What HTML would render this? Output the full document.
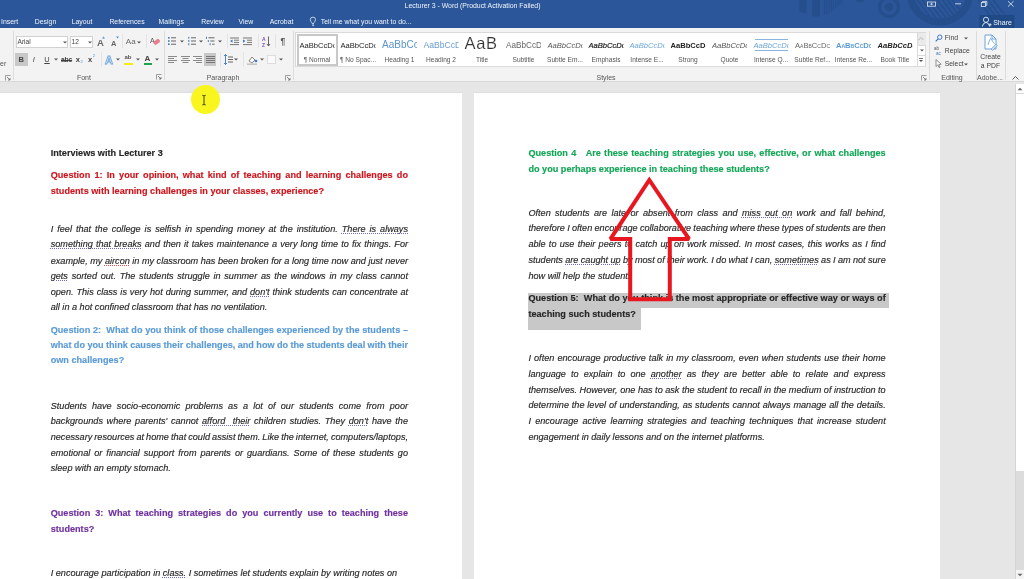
<!DOCTYPE html>
<html><head><meta charset="utf-8">
<style>
*{box-sizing:border-box}
html,body{margin:0;padding:0}
body{width:1024px;height:579px;overflow:hidden;position:relative;background:#e6e6e6;font-family:"Liberation Sans",sans-serif}
.abs{position:absolute}
.rt{position:absolute;white-space:pre}
#titlebar{position:absolute;left:0;top:0;width:1024px;height:28.3px;background:#2b579a;color:#fff;overflow:hidden}
.tab{position:absolute;top:17px;font-size:6.9px;color:#f0f4fa;line-height:9px;white-space:pre}
#ribbon{position:absolute;left:0;top:28.3px;width:1024px;height:54.2px;background:#f3f3f3;border-bottom:1px solid #d9d9d9}
.page{position:absolute;top:92.8px;height:500px;background:#fff;box-shadow:0 -0.5px 0 #d6d6d6}
.ln{position:absolute;font-size:9.15px;line-height:12px;white-space:pre;-webkit-text-stroke:0.15px currentColor}
.ub{text-decoration:underline dotted;text-decoration-color:#6a6ad0;text-underline-offset:0.6px;text-decoration-thickness:1px}
.ur{text-decoration:underline dotted;text-decoration-color:#e05050;text-underline-offset:0.6px;text-decoration-thickness:1px}
</style></head><body>
<div id="all" style="position:absolute;left:0;top:0;width:1024px;height:579px;will-change:transform">
<div id="titlebar">
<svg class="abs" style="left:0;top:0" width="1024" height="28"><path d="M799.3 0h7.1v13.5l-7.1-2z" fill="#254e8c"/><rect x="812.2" y="0" width="7.7" height="16.4" fill="#254e8c"/><rect x="824.0" y="0" width="1.2" height="15" fill="#254e8c"/><rect x="826.2" y="0" width="1.2" height="14.5" fill="#254e8c"/><rect x="828.4" y="0" width="1.2" height="13.5" fill="#254e8c"/><rect x="830.6" y="0" width="1.2" height="12" fill="#254e8c"/><rect x="832.8" y="0" width="1.2" height="10" fill="#254e8c"/><rect x="835.0" y="0" width="1.2" height="8" fill="#254e8c"/><rect x="837.2" y="0" width="1.2" height="6.5" fill="#254e8c"/><rect x="839.4" y="0" width="1.2" height="5" fill="#254e8c"/><rect x="841.6" y="0" width="1.2" height="3" fill="#254e8c"/><path d="M855 0h9.4q-2 2.5-4.7 2.5t-4.7-2.5z" fill="#254e8c"/><circle cx="889" cy="7" r="9.4" fill="none" stroke="#254e8c" stroke-width="3.4"/><circle cx="889" cy="7" r="4.3" fill="#254e8c"/><clipPath id="bigc"><circle cx="940" cy="-8" r="30"/></clipPath><circle cx="940" cy="-8" r="30" fill="none" stroke="#254e8c" stroke-width="7"/><g clip-path="url(#bigc)"><path d="M900 -10l30 40" stroke="#254e8c" stroke-width="1.6"/><path d="M905 -10l30 40" stroke="#254e8c" stroke-width="1.6"/><path d="M910 -10l30 40" stroke="#254e8c" stroke-width="1.6"/><path d="M915 -10l30 40" stroke="#254e8c" stroke-width="1.6"/><path d="M920 -10l30 40" stroke="#254e8c" stroke-width="1.6"/><path d="M925 -10l30 40" stroke="#254e8c" stroke-width="1.6"/><path d="M930 -10l30 40" stroke="#254e8c" stroke-width="1.6"/><path d="M935 -10l30 40" stroke="#254e8c" stroke-width="1.6"/><path d="M940 -10l30 40" stroke="#254e8c" stroke-width="1.6"/><path d="M945 -10l30 40" stroke="#254e8c" stroke-width="1.6"/></g><path d="M978 0l14 18" stroke="#254e8c" stroke-width="1.5"/><path d="M983 0l14 18" stroke="#254e8c" stroke-width="1.5"/><path d="M988 0l14 18" stroke="#254e8c" stroke-width="1.5"/><path d="M993 0l14 18" stroke="#254e8c" stroke-width="1.5"/><rect x="927.5" y="2" width="8" height="4.2" fill="none" stroke="#e6ecf5" stroke-width="0.8"/><path d="M930 4.1h3M931.5 3v2.2" stroke="#e6ecf5" stroke-width="0.7"/><path d="M955 3.8h6" stroke="#e6ecf5" stroke-width="0.8"/><rect x="981.3" y="2.4" width="4.2" height="4" fill="none" stroke="#e6ecf5" stroke-width="0.8"/><path d="M982.6 2.4v-1h4.2v4h-1.3" fill="none" stroke="#e6ecf5" stroke-width="0.8"/><path d="M1008 1.2l5.6 5.4M1013.6 1.2l-5.6 5.4" stroke="#e6ecf5" stroke-width="0.8"/><rect x="979.3" y="15.1" width="35.1" height="12.9" fill="#1f4a85"/><circle cx="986" cy="19.8" r="2.6" fill="none" stroke="#e6ecf5" stroke-width="0.9"/><path d="M982.3 26.6q0.5-3.6 3.7-4.2q3.2 0.6 3.7 4.2" fill="none" stroke="#e6ecf5" stroke-width="0.9"/><path d="M988.6 24.7h3M990.1 23.2v3" stroke="#e6ecf5" stroke-width="0.8"/><path d="M312.3 24.2v-1.2q-2-1.3-2-3.3a2.6 2.6 0 0 1 5.2 0q0 2-2 3.3v1.2z" fill="none" stroke="#e6ecf5" stroke-width="0.8"/><path d="M312.3 25.6h1.8" stroke="#e6ecf5" stroke-width="0.8"/></svg>
<div class="tab" style="left:993.2px;top:17.6px;font-size:7px">Share</div>
  <div class="tab" style="left:404.6px;top:1px">Lecturer 3 - Word (Product Activation Failed)</div>
  <div class="tab" style="left:1px">Insert</div>
  <div class="tab" style="left:34.8px">Design</div>
  <div class="tab" style="left:71.7px">Layout</div>
  <div class="tab" style="left:109.4px">References</div>
  <div class="tab" style="left:158.6px">Mailings</div>
  <div class="tab" style="left:201.2px">Review</div>
  <div class="tab" style="left:238.5px">View</div>
  <div class="tab" style="left:269.7px">Acrobat</div>
  <div class="tab" style="left:320.8px">Tell me what you want to do...</div>
</div>
<div id="ribbon"></div>
<div class="rt" style="left:0px;top:60.10px;font-size:7px;line-height:8.40px;color:#555;">er</div>
<svg class="abs" style="left:4.5px;top:75px" width="6" height="6"><path d="M0.5 5.5v-5h5" stroke="#888" fill="none" stroke-width="0.8"/><path d="M2 2l3 3M5 3v2h-2" stroke="#666" fill="none" stroke-width="0.8"/></svg>
<div class="abs" style="left:12.6px;top:31px;width:1.00px;height:49.00px;background:#dcdcdc"></div>
<div class="abs" style="left:15.6px;top:35.7px;width:52.90px;height:12.50px;background:#fff;border:1px solid #d2d2d2"></div>
<div class="rt" style="left:17.5px;top:38.04px;font-size:6.6px;line-height:7.92px;color:#444;">Arial</div>
<svg class="abs" style="left:62.5px;top:40.5px" width="5" height="3"><path d="M0 0.5h4l-2 2z" fill="#555"/></svg>
<div class="abs" style="left:69.7px;top:35.7px;width:23.50px;height:12.50px;background:#fff;border:1px solid #d2d2d2"></div>
<div class="rt" style="left:71.5px;top:38.04px;font-size:6.6px;line-height:7.92px;color:#444;">12</div>
<svg class="abs" style="left:87.5px;top:40.5px" width="5" height="3"><path d="M0 0.5h4l-2 2z" fill="#555"/></svg>
<div class="rt" style="left:97px;top:36.50px;font-size:9.5px;line-height:11.40px;color:#666;font-weight:bold">A</div>
<svg class="abs" style="left:102px;top:36px" width="4" height="3"><path d="M0 2.5l1.5-2 1.5 2z" fill="#4a8fd0"/></svg>
<div class="rt" style="left:111px;top:38.50px;font-size:7.5px;line-height:9.00px;color:#666;font-weight:bold">A</div>
<svg class="abs" style="left:116px;top:36px" width="4" height="3"><path d="M0 0.5l1.5 2 1.5-2z" fill="#4a8fd0"/></svg>
<div class="abs" style="left:121.8px;top:34px;width:1.00px;height:14.00px;background:#e4e4e4"></div>
<div class="rt" style="left:125.8px;top:37.20px;font-size:8px;line-height:9.60px;color:#666;">Aa</div>
<svg class="abs" style="left:137px;top:40.5px" width="5" height="3"><path d="M0 0.5h4l-2 2z" fill="#555"/></svg>
<div class="abs" style="left:146px;top:34px;width:1.00px;height:14.00px;background:#e4e4e4"></div>
<svg class="abs" style="left:150px;top:36px" width="11" height="11"><text x="0" y="7" font-family="Liberation Sans" font-size="7" fill="#555">A</text><rect x="3.5" y="4" width="6.5" height="4" rx="1" transform="rotate(-35 6.5 6)" fill="#e87f8c"/></svg>
<div class="abs" style="left:15.3px;top:53px;width:12.40px;height:13.20px;background:#c8c8c8"></div>
<div class="rt" style="left:18.6px;top:55.10px;font-size:7.5px;line-height:9.00px;color:#444;font-weight:bold">B</div>
<div class="rt" style="left:32.8px;top:55.10px;font-size:7.5px;line-height:9.00px;color:#444;font-style:italic">I</div>
<div class="rt" style="left:44.3px;top:55.10px;font-size:7.5px;line-height:9.00px;color:#444;"><u>U</u></div>
<svg class="abs" style="left:54px;top:58.3px" width="5" height="3"><path d="M0 0.5h4l-2 2z" fill="#555"/></svg>
<div class="rt" style="left:61px;top:55.52px;font-size:6.8px;line-height:8.16px;color:#444;font-weight:bold;letter-spacing:-0.2px"><s>abc</s></div>
<div class="rt" style="left:75.8px;top:55.10px;font-size:7.5px;line-height:9.00px;color:#444;font-weight:bold">x</div>
<div class="rt" style="left:80.6px;top:60.10px;font-size:4px;line-height:4.80px;color:#4a8fd0;">2</div>
<div class="rt" style="left:88px;top:55.10px;font-size:7.5px;line-height:9.00px;color:#444;font-weight:bold">x</div>
<div class="rt" style="left:92.8px;top:54.10px;font-size:4px;line-height:4.80px;color:#4a8fd0;">2</div>
<div class="abs" style="left:100.8px;top:52px;width:1.00px;height:15.00px;background:#e4e4e4"></div>
<svg class="abs" style="left:104px;top:53px" width="11" height="12"><text x="1" y="10.5" font-family="Liberation Sans" font-size="11" font-weight="bold" fill="#eaf2fb" stroke="#6fa6da" stroke-width="0.8">A</text></svg>
<svg class="abs" style="left:115.7px;top:58.3px" width="5" height="3"><path d="M0 0.5h4l-2 2z" fill="#555"/></svg>
<div class="rt" style="left:124.5px;top:53.90px;font-size:6px;line-height:7.20px;color:#555;font-weight:bold">ab</div>
<div class="abs" style="left:124px;top:62.5px;width:9.00px;height:2.50px;background:#f2ee0a"></div>
<svg class="abs" style="left:136px;top:58.3px" width="5" height="3"><path d="M0 0.5h4l-2 2z" fill="#555"/></svg>
<div class="rt" style="left:144.6px;top:53.70px;font-size:8px;line-height:9.60px;color:#444;font-weight:bold">A</div>
<div class="abs" style="left:143.5px;top:62.5px;width:8.90px;height:2.50px;background:#1ca84a"></div>
<svg class="abs" style="left:155px;top:58.3px" width="5" height="3"><path d="M0 0.5h4l-2 2z" fill="#555"/></svg>
<div class="rt" style="left:83.9px;top:73.70px;font-size:7px;line-height:8.40px;color:#555;transform:translateX(-50%);">Font</div>
<svg class="abs" style="left:155.9px;top:74px" width="6" height="6"><path d="M0.5 5.5v-5h5" stroke="#888" fill="none" stroke-width="0.8"/><path d="M2 2l3 3M5 3v2h-2" stroke="#666" fill="none" stroke-width="0.8"/></svg>
<div class="abs" style="left:163.5px;top:31px;width:1.00px;height:49.00px;background:#dcdcdc"></div>
<svg class="abs" style="left:168px;top:36px" width="10" height="10"><rect x="0" y="1.0" width="1.6" height="1.6" fill="#3d78c0"/><rect x="3" y="1.3" width="5" height="1" fill="#666"/><rect x="0" y="4.2" width="1.6" height="1.6" fill="#3d78c0"/><rect x="3" y="4.5" width="5" height="1" fill="#666"/><rect x="0" y="7.4" width="1.6" height="1.6" fill="#3d78c0"/><rect x="3" y="7.7" width="5" height="1" fill="#666"/></svg>
<svg class="abs" style="left:179.6px;top:40.0px" width="5" height="3"><path d="M0 0.5h4l-2 2z" fill="#555"/></svg>
<svg class="abs" style="left:188px;top:36px" width="10" height="10"><rect x="0.3" y="0.8" width="1" height="2" fill="#3d78c0"/><rect x="3" y="1.3" width="5" height="1" fill="#666"/><rect x="0.3" y="4.0" width="1" height="2" fill="#3d78c0"/><rect x="3" y="4.5" width="5" height="1" fill="#666"/><rect x="0.3" y="7.2" width="1" height="2" fill="#3d78c0"/><rect x="3" y="7.7" width="5" height="1" fill="#666"/></svg>
<svg class="abs" style="left:199px;top:40.0px" width="5" height="3"><path d="M0 0.5h4l-2 2z" fill="#555"/></svg>
<svg class="abs" style="left:206px;top:36px" width="10" height="10"><rect x="0.0" y="0.8" width="1" height="2" fill="#3d78c0"/><rect x="2.5" y="1.3" width="6.0" height="1" fill="#666"/><rect x="1.8" y="4.0" width="1" height="2" fill="#3d78c0"/><rect x="4.3" y="4.5" width="4.2" height="1" fill="#666"/><rect x="3.6" y="7.2" width="1" height="2" fill="#3d78c0"/><rect x="6.1" y="7.7" width="2.4" height="1" fill="#666"/></svg>
<svg class="abs" style="left:218px;top:40.0px" width="5" height="3"><path d="M0 0.5h4l-2 2z" fill="#555"/></svg>
<div class="abs" style="left:226.8px;top:34px;width:1.00px;height:14.00px;background:#e4e4e4"></div>
<svg class="abs" style="left:230px;top:37px" width="10" height="9"><rect x="0" y="0.5" width="9" height="1" fill="#777"/><rect x="4" y="2.7" width="5" height="1" fill="#777"/><rect x="4" y="4.9" width="5" height="1" fill="#777"/><rect x="0" y="7.1000000000000005" width="9" height="1" fill="#777"/><path d="M2.5 2.5l-2.5 1.6 2.5 1.6z" fill="#3d78c0"/></svg>
<svg class="abs" style="left:243px;top:37px" width="10" height="9"><rect x="0" y="0.5" width="9" height="1" fill="#777"/><rect x="4" y="2.7" width="5" height="1" fill="#777"/><rect x="4" y="4.9" width="5" height="1" fill="#777"/><rect x="0" y="7.1000000000000005" width="9" height="1" fill="#777"/><path d="M0 2.5l2.5 1.6-2.5 1.6z" fill="#3d78c0"/></svg>
<div class="abs" style="left:257.8px;top:34px;width:1.00px;height:14.00px;background:#e4e4e4"></div>
<svg class="abs" style="left:262px;top:36px" width="9" height="11"><text x="0" y="5" font-family="Liberation Sans" font-size="5" font-weight="bold" fill="#7c4fb5">A</text><text x="0" y="10.5" font-family="Liberation Sans" font-size="5" font-weight="bold" fill="#7c4fb5">Z</text><path d="M6.5 0.5v9M5 8l1.5 2 1.5-2" stroke="#555" stroke-width="0.9" fill="none"/></svg>
<div class="abs" style="left:274.6px;top:34px;width:1.00px;height:14.00px;background:#e4e4e4"></div>
<div class="rt" style="left:280.4px;top:36.40px;font-size:8.5px;line-height:10.20px;color:#555;font-weight:bold">&#182;</div>
<svg class="abs" style="left:168px;top:56px" width="10" height="8"><rect x="0" y="0" width="9" height="1" fill="#8a8a8a"/><rect x="0" y="2" width="6" height="1" fill="#8a8a8a"/><rect x="0" y="4" width="9" height="1" fill="#8a8a8a"/><rect x="0" y="6" width="6" height="1" fill="#8a8a8a"/></svg>
<svg class="abs" style="left:181px;top:56px" width="10" height="8"><rect x="0.0" y="0" width="9" height="1" fill="#8a8a8a"/><rect x="1.5" y="2" width="6" height="1" fill="#8a8a8a"/><rect x="0.0" y="4" width="9" height="1" fill="#8a8a8a"/><rect x="1.5" y="6" width="6" height="1" fill="#8a8a8a"/></svg>
<svg class="abs" style="left:193px;top:56px" width="10" height="8"><rect x="0" y="0" width="9" height="1" fill="#8a8a8a"/><rect x="3" y="2" width="6" height="1" fill="#8a8a8a"/><rect x="0" y="4" width="9" height="1" fill="#8a8a8a"/><rect x="3" y="6" width="6" height="1" fill="#8a8a8a"/></svg>
<div class="abs" style="left:204px;top:53px;width:12.40px;height:13.00px;background:#c8c8c8"></div>
<svg class="abs" style="left:206px;top:56px" width="10" height="8"><rect x="0" y="0" width="9" height="1" fill="#777"/><rect x="0" y="2" width="9" height="1" fill="#777"/><rect x="0" y="4" width="9" height="1" fill="#777"/><rect x="0" y="6" width="9" height="1" fill="#777"/></svg>
<div class="abs" style="left:219.5px;top:52px;width:1.00px;height:15.00px;background:#e4e4e4"></div>
<svg class="abs" style="left:224px;top:54px" width="10" height="11"><path d="M1.5 0.5v10M0 2l1.5-1.5 1.5 1.5M0 9l1.5 1.5 1.5-1.5" stroke="#3d78c0" stroke-width="0.9" fill="none"/><rect x="4" y="2.5" width="5" height="1" fill="#666"/><rect x="4" y="5" width="5" height="1" fill="#666"/><rect x="4" y="7.5" width="5" height="1" fill="#666"/></svg>
<svg class="abs" style="left:234.3px;top:58.3px" width="5" height="3"><path d="M0 0.5h4l-2 2z" fill="#555"/></svg>
<div class="abs" style="left:242.8px;top:52px;width:1.00px;height:15.00px;background:#e4e4e4"></div>
<svg class="abs" style="left:247px;top:54px" width="11" height="11"><path d="M2 7l3-4 3 3-3 3z" fill="#fff" stroke="#666" stroke-width="0.8"/><circle cx="9" cy="7" r="1.3" fill="#3d78c0"/><rect x="0" y="9.5" width="10" height="1.3" fill="#bbb"/></svg>
<svg class="abs" style="left:259.5px;top:58.3px" width="5" height="3"><path d="M0 0.5h4l-2 2z" fill="#555"/></svg>
<svg class="abs" style="left:267px;top:55px" width="9" height="9"><rect x="0.5" y="0.5" width="8" height="8" fill="#fafafa" stroke="#b0b0b0" stroke-width="0.7" stroke-dasharray="1 1"/></svg>
<svg class="abs" style="left:279px;top:58.3px" width="5" height="3"><path d="M0 0.5h4l-2 2z" fill="#555"/></svg>
<div class="rt" style="left:223px;top:73.70px;font-size:7px;line-height:8.40px;color:#555;transform:translateX(-50%);">Paragraph</div>
<svg class="abs" style="left:285px;top:74.5px" width="6" height="6"><path d="M0.5 5.5v-5h5" stroke="#888" fill="none" stroke-width="0.8"/><path d="M2 2l3 3M5 3v2h-2" stroke="#666" fill="none" stroke-width="0.8"/></svg>
<div class="abs" style="left:292.7px;top:31px;width:1.00px;height:49.00px;background:#dcdcdc"></div>
<div class="abs" style="left:294.5px;top:32.1px;width:622.50px;height:34.50px;background:#fff;border:1px solid #dadada;border-right:none"></div>
<div class="abs" style="left:296.6px;top:33.7px;width:41.00px;height:32.30px;border:2px solid #c8c8c8"></div>
<div class="abs" style="left:299.5px;top:33.8px;width:35px;height:14px;clip-path:inset(-6px 0 -6px 0);white-space:nowrap"><span class="rt" style="position:relative;line-height:14px;font-size:7.6px;color:#222">AaBbCcDc</span></div>
<div class="rt" style="left:317px;top:55.64px;font-size:6.6px;line-height:7.92px;color:#555;transform:translateX(-50%);">&#182; Normal</div>
<div class="abs" style="left:340.5px;top:33.8px;width:35px;height:14px;clip-path:inset(-6px 0 -6px 0);white-space:nowrap"><span class="rt" style="position:relative;line-height:14px;font-size:7.6px;color:#222">AaBbCcDc</span></div>
<div class="rt" style="left:358px;top:55.64px;font-size:6.6px;line-height:7.92px;color:#555;transform:translateX(-50%);">&#182; No Spac...</div>
<div class="abs" style="left:382.0px;top:33.8px;width:35px;height:14px;clip-path:inset(-6px 0 -6px 0);white-space:nowrap"><span class="rt" style="position:relative;line-height:14px;font-size:10px;color:#5b93cc">AaBbCc</span></div>
<div class="rt" style="left:399.5px;top:55.64px;font-size:6.6px;line-height:7.92px;color:#555;transform:translateX(-50%);">Heading 1</div>
<div class="abs" style="left:423.5px;top:33.8px;width:35px;height:14px;clip-path:inset(-6px 0 -6px 0);white-space:nowrap"><span class="rt" style="position:relative;line-height:14px;font-size:8.6px;color:#6a9ccf">AaBbCcD</span></div>
<div class="rt" style="left:441px;top:55.64px;font-size:6.6px;line-height:7.92px;color:#555;transform:translateX(-50%);">Heading 2</div>
<div class="abs" style="left:464.5px;top:33.8px;width:35px;height:14px;clip-path:inset(-6px 0 -6px 0);white-space:nowrap"><span class="rt" style="position:relative;line-height:14px;font-size:16.5px;color:#333;top:1.4px;letter-spacing:0.7px;-webkit-text-stroke:0.15px #fff">AaB</span></div>
<div class="rt" style="left:482px;top:55.64px;font-size:6.6px;line-height:7.92px;color:#555;transform:translateX(-50%);">Title</div>
<div class="abs" style="left:506.0px;top:33.8px;width:35px;height:14px;clip-path:inset(-6px 0 -6px 0);white-space:nowrap"><span class="rt" style="position:relative;line-height:14px;font-size:8.2px;color:#666">AaBbCcD</span></div>
<div class="rt" style="left:523.5px;top:55.64px;font-size:6.6px;line-height:7.92px;color:#555;transform:translateX(-50%);">Subtitle</div>
<div class="abs" style="left:547.5px;top:33.8px;width:35px;height:14px;clip-path:inset(-6px 0 -6px 0);white-space:nowrap"><span class="rt" style="position:relative;line-height:14px;font-size:7.6px;color:#555;font-style:italic">AaBbCcDc</span></div>
<div class="rt" style="left:565px;top:55.64px;font-size:6.6px;line-height:7.92px;color:#555;transform:translateX(-50%);">Subtle Em...</div>
<div class="abs" style="left:588.5px;top:33.8px;width:35px;height:14px;clip-path:inset(-6px 0 -6px 0);white-space:nowrap"><span class="rt" style="position:relative;line-height:14px;font-size:7.6px;color:#222;font-style:italic;-webkit-text-stroke:0.2px #222">AaBbCcDc</span></div>
<div class="rt" style="left:606px;top:55.64px;font-size:6.6px;line-height:7.92px;color:#555;transform:translateX(-50%);">Emphasis</div>
<div class="abs" style="left:629.5px;top:33.8px;width:35px;height:14px;clip-path:inset(-6px 0 -6px 0);white-space:nowrap"><span class="rt" style="position:relative;line-height:14px;font-size:7.6px;color:#6ea5d8;font-style:italic">AaBbCcDc</span></div>
<div class="rt" style="left:647px;top:55.64px;font-size:6.6px;line-height:7.92px;color:#555;transform:translateX(-50%);">Intense E...</div>
<div class="abs" style="left:670.5px;top:33.8px;width:35px;height:14px;clip-path:inset(-6px 0 -6px 0);white-space:nowrap"><span class="rt" style="position:relative;line-height:14px;font-size:7.6px;color:#222;font-weight:bold">AaBbCcDc</span></div>
<div class="rt" style="left:688px;top:55.64px;font-size:6.6px;line-height:7.92px;color:#555;transform:translateX(-50%);">Strong</div>
<div class="abs" style="left:712.0px;top:33.8px;width:35px;height:14px;clip-path:inset(-6px 0 -6px 0);white-space:nowrap"><span class="rt" style="position:relative;line-height:14px;font-size:7.6px;color:#555;font-style:italic">AaBbCcDc</span></div>
<div class="rt" style="left:729.5px;top:55.64px;font-size:6.6px;line-height:7.92px;color:#555;transform:translateX(-50%);">Quote</div>
<div class="abs" style="left:753.5px;top:33.8px;width:35px;height:14px;clip-path:inset(-6px 0 -6px 0);white-space:nowrap"><span class="rt" style="position:relative;line-height:14px;font-size:7.6px;color:#6ea5d8;font-style:italic">AaBbCcDc</span></div>
<div class="rt" style="left:771px;top:55.64px;font-size:6.6px;line-height:7.92px;color:#555;transform:translateX(-50%);">Intense Q...</div>
<div class="abs" style="left:795.0px;top:33.8px;width:35px;height:14px;clip-path:inset(-6px 0 -6px 0);white-space:nowrap"><span class="rt" style="position:relative;line-height:14px;font-size:7.6px;color:#666;font-variant:small-caps">AaBbCcDc</span></div>
<div class="rt" style="left:812.5px;top:55.64px;font-size:6.6px;line-height:7.92px;color:#555;transform:translateX(-50%);">Subtle Ref...</div>
<div class="abs" style="left:836.0px;top:33.8px;width:35px;height:14px;clip-path:inset(-6px 0 -6px 0);white-space:nowrap"><span class="rt" style="position:relative;line-height:14px;font-size:7.6px;color:#5b9bd5;font-weight:bold;font-variant:small-caps">AaBbCcDc</span></div>
<div class="rt" style="left:853.5px;top:55.64px;font-size:6.6px;line-height:7.92px;color:#555;transform:translateX(-50%);">Intense Re...</div>
<div class="abs" style="left:877.5px;top:33.8px;width:35px;height:14px;clip-path:inset(-6px 0 -6px 0);white-space:nowrap"><span class="rt" style="position:relative;line-height:14px;font-size:7.6px;color:#222;font-weight:bold;font-style:italic">AaBbCcDc</span></div>
<div class="rt" style="left:895px;top:55.64px;font-size:6.6px;line-height:7.92px;color:#555;transform:translateX(-50%);">Book Title</div>
<div class="abs" style="left:755px;top:38.8px;width:33.00px;height:0.80px;background:#8ab4e0"></div>
<div class="abs" style="left:755px;top:50px;width:33.00px;height:0.80px;background:#8ab4e0"></div>
<div class="abs" style="left:917px;top:32.1px;width:9.00px;height:34.50px;background:#fff;border:1px solid #dadada"></div>
<div class="abs" style="left:917.5px;top:32.6px;width:8.00px;height:12.40px;background:#eaeaea"></div>
<svg class="abs" style="left:918px;top:37px" width="6" height="4"><path d="M0.5 3l2.5-2.5 2.5 2.5" stroke="#aaa" fill="none" stroke-width="0.8"/></svg>
<div class="abs" style="left:917px;top:45px;width:9.00px;height:0.70px;background:#dadada"></div>
<svg class="abs" style="left:919.5px;top:48.5px" width="5" height="3"><path d="M0 0.5h4l-2 2z" fill="#555"/></svg>
<div class="abs" style="left:917px;top:55px;width:9.00px;height:0.70px;background:#dadada"></div>
<svg class="abs" style="left:919px;top:58px" width="5" height="5"><rect x="0" y="0" width="4" height="0.8" fill="#555"/><path d="M0 2h4l-2 2z" fill="#555"/></svg>
<div class="rt" style="left:606px;top:73.70px;font-size:7px;line-height:8.40px;color:#555;transform:translateX(-50%);">Styles</div>
<svg class="abs" style="left:921px;top:74.5px" width="6" height="6"><path d="M0.5 5.5v-5h5" stroke="#888" fill="none" stroke-width="0.8"/><path d="M2 2l3 3M5 3v2h-2" stroke="#666" fill="none" stroke-width="0.8"/></svg>
<div class="abs" style="left:929px;top:31px;width:1.00px;height:49.00px;background:#dcdcdc"></div>
<svg class="abs" style="left:935px;top:34px" width="8" height="8"><circle cx="4.8" cy="3.2" r="2.2" fill="none" stroke="#3d78c0" stroke-width="1"/><path d="M3.2 4.8l-2.5 2.5" stroke="#3d78c0" stroke-width="1.2"/></svg>
<div class="rt" style="left:944.8px;top:33.72px;font-size:6.8px;line-height:8.16px;color:#444;">Find</div>
<svg class="abs" style="left:963.5px;top:36.5px" width="5" height="3"><path d="M0 0.5h4l-2 2z" fill="#555"/></svg>
<svg class="abs" style="left:934px;top:46px" width="9" height="10"><text x="0" y="4.3" font-family="Liberation Sans" font-size="4.5" fill="#555">ab</text><text x="2" y="9" font-family="Liberation Sans" font-size="4.5" fill="#3d78c0">ac</text></svg>
<div class="rt" style="left:944.8px;top:46.72px;font-size:6.8px;line-height:8.16px;color:#444;">Replace</div>
<svg class="abs" style="left:935px;top:59px" width="8" height="9"><path d="M1 0.5v7l1.8-1.6 1.3 2.8 1-0.5-1.3-2.7 2.4-0.2z" fill="#fff" stroke="#666" stroke-width="0.7"/></svg>
<div class="rt" style="left:944.8px;top:59.72px;font-size:6.8px;line-height:8.16px;color:#444;">Select</div>
<svg class="abs" style="left:964px;top:62.5px" width="5" height="3"><path d="M0 0.5h4l-2 2z" fill="#555"/></svg>
<div class="rt" style="left:952px;top:73.70px;font-size:7px;line-height:8.40px;color:#555;transform:translateX(-50%);">Editing</div>
<div class="abs" style="left:975.5px;top:31px;width:1.00px;height:49.00px;background:#dcdcdc"></div>
<svg class="abs" style="left:983px;top:34px" width="15" height="17"><path d="M2 1h7l4 4v10H2z" fill="#fff" stroke="#5c9ad4" stroke-width="0.9"/><path d="M9 1v4h4" fill="none" stroke="#5c9ad4" stroke-width="0.9"/><path d="M5 11c1-3 2-6 2.5-6.5s1 2 4 5" fill="none" stroke="#5c9ad4" stroke-width="0.8"/><path d="M8 15l5-5 1.5 1.5-5 5z" fill="#c9dcf0" stroke="#5c9ad4" stroke-width="0.6"/></svg>
<div class="rt" style="left:990.5px;top:52.92px;font-size:6.8px;line-height:8.16px;color:#444;transform:translateX(-50%);">Create</div>
<div class="rt" style="left:990.5px;top:61.92px;font-size:6.8px;line-height:8.16px;color:#444;transform:translateX(-50%);">a PDF</div>
<div class="rt" style="left:990px;top:73.70px;font-size:7px;line-height:8.40px;color:#555;transform:translateX(-50%);">Adobe...</div>
<div class="abs" style="left:1005px;top:31px;width:1.00px;height:49.00px;background:#dcdcdc"></div>
<svg class="abs" style="left:1012px;top:76px" width="7" height="4"><path d="M0.5 3.5l3-3 3 3" stroke="#555" fill="none" stroke-width="0.9"/></svg>
<div class="page" style="left:-4px;width:466px"></div>
<div class="page" style="left:474px;width:466px"></div>
<div class="abs" style="left:527.8px;top:292.8px;width:361.1px;height:15.2px;background:#c8c8c8"></div>
<div class="abs" style="left:527.8px;top:308px;width:113.2px;height:21.8px;background:#c8c8c8"></div>
<div id="docw" style="position:absolute;left:0;top:0;width:1024px;height:579px"><div class="ln" style="left:50.7px;top:146.83px;font-weight:bold;color:#262626;word-spacing:0.000px">Interviews with Lecturer 3</div>
<div class="ln" style="left:50.7px;top:168.83px;font-weight:bold;color:#cc161e;word-spacing:1.679px">Question 1: In your opinion, what kind of teaching and learning challenges do</div>
<div class="ln" style="left:50.7px;top:184.53px;font-weight:bold;color:#cc161e;word-spacing:0.000px">students with learning challenges in your classes, experience?</div>
<div class="ln" style="left:50.7px;top:222.73px;font-style:italic;color:#262626;word-spacing:1.435px">I feel that the college is selfish in spending money at the institution. <span class="ub">There is always</span></div>
<div class="ln" style="left:50.7px;top:238.33px;font-style:italic;color:#262626;word-spacing:0.589px"><span class="ub">something that breaks</span> and then it takes maintenance a very long time to fix things. For</div>
<div class="ln" style="left:50.7px;top:254.53px;font-style:italic;color:#262626;word-spacing:-0.017px">example, my <span class="ur">aircon</span> in my classroom has been broken for a long time now and just never</div>
<div class="ln" style="left:50.7px;top:270.13px;font-style:italic;color:#262626;word-spacing:1.175px"><span class="ub">gets</span> sorted out. The students struggle in summer as the windows in my class cannot</div>
<div class="ln" style="left:50.7px;top:285.83px;font-style:italic;color:#262626;word-spacing:0.398px">open. This class is very hot during summer, and <span class="ub">don&#x27;t</span> think students can concentrate at</div>
<div class="ln" style="left:50.7px;top:301.43px;font-style:italic;color:#262626;word-spacing:0.000px">all in a hot confined classroom that has no ventilation.</div>
<div class="ln" style="left:50.7px;top:323.83px;font-weight:bold;color:#5b9bd5;word-spacing:0.133px">Question 2:  What do you think of those challenges experienced by the students –</div>
<div class="ln" style="left:50.7px;top:339.33px;font-weight:bold;color:#5b9bd5;word-spacing:-0.156px">what do you think causes their challenges, and how do the students deal with their</div>
<div class="ln" style="left:50.7px;top:354.43px;font-weight:bold;color:#5b9bd5;word-spacing:0.000px">own challenges?</div>
<div class="ln" style="left:50.7px;top:399.83px;font-style:italic;color:#262626;word-spacing:2.640px">Students have socio-economic problems as a lot of our students come from poor</div>
<div class="ln" style="left:50.7px;top:415.23px;font-style:italic;color:#262626;word-spacing:1.120px">backgrounds where parents&#x27; cannot <span class="ub">afford  their</span> children studies. They <span class="ub">don&#x27;t</span> have the</div>
<div class="ln" style="left:50.7px;top:431.23px;font-style:italic;color:#262626;word-spacing:-0.487px">necessary resources at home that could assist them. Like the internet, computers/laptops,</div>
<div class="ln" style="left:50.7px;top:447.03px;font-style:italic;color:#262626;word-spacing:1.453px">emotional or financial support from parents or guardians. Some of these students go</div>
<div class="ln" style="left:50.7px;top:462.23px;font-style:italic;color:#262626;word-spacing:0.000px">sleep with an empty stomach.</div>
<div class="ln" style="left:50.7px;top:507.33px;font-weight:bold;color:#7030a0;word-spacing:2.428px">Question 3: What teaching strategies do you currently use to teaching these</div>
<div class="ln" style="left:50.7px;top:522.63px;font-weight:bold;color:#7030a0;word-spacing:0.000px">students?</div>
<div class="ln" style="left:50.7px;top:566.93px;font-style:italic;color:#262626;word-spacing:0.000px">I encourage participation in <span class="ub">class.</span> I sometimes let students explain by writing notes on</div>
<div class="ln" style="left:528.4px;top:147.23px;font-weight:bold;color:#12a656;word-spacing:0.712px">Question 4   Are these teaching strategies you use, effective, or what challenges</div>
<div class="ln" style="left:528.4px;top:162.83px;font-weight:bold;color:#12a656;word-spacing:0.000px">do you perhaps experience in teaching these students?</div>
<div class="ln" style="left:528.4px;top:207.03px;font-style:italic;color:#262626;word-spacing:1.806px">Often students are late or absent from class and <span class="ub">miss out on</span> work and fall behind,</div>
<div class="ln" style="left:528.4px;top:222.23px;font-style:italic;color:#262626;word-spacing:-0.281px">therefore I often encourage collaborative teaching where these types of students are then</div>
<div class="ln" style="left:528.4px;top:237.93px;font-style:italic;color:#262626;word-spacing:0.689px">able to use their peers to catch up on work missed. In most cases, this works as I find</div>
<div class="ln" style="left:528.4px;top:253.63px;font-style:italic;color:#262626;word-spacing:-0.201px">students <span class="ub">are caught up</span> by most of their work. I do what I can, <span class="ub">sometimes</span> as I am not sure</div>
<div class="ln" style="left:528.4px;top:269.83px;font-style:italic;color:#262626;word-spacing:0.000px">how will help the students</div>
<div class="ln" style="left:528.4px;top:292.43px;font-weight:bold;color:#262626;word-spacing:0.053px">Question 5:  What do you think is the most appropriate or effective way or ways of</div>
<div class="ln" style="left:528.4px;top:308.03px;font-weight:bold;color:#262626;word-spacing:0.000px">teaching such students?</div>
<div class="ln" style="left:528.4px;top:352.23px;font-style:italic;color:#262626;word-spacing:0.563px">I often encourage productive talk in my classroom, even when students use their home</div>
<div class="ln" style="left:528.4px;top:367.83px;font-style:italic;color:#262626;word-spacing:2.547px">language to explain to one <span class="ub">another</span> as they are better able to relate and express</div>
<div class="ln" style="left:528.4px;top:383.53px;font-style:italic;color:#262626;word-spacing:-0.020px">themselves. However, one has to ask the student to recall in the medium of instruction to</div>
<div class="ln" style="left:528.4px;top:399.13px;font-style:italic;color:#262626;word-spacing:0.311px">determine the level of understanding, as students cannot always manage all the details.</div>
<div class="ln" style="left:528.4px;top:414.63px;font-style:italic;color:#262626;word-spacing:1.691px">I encourage active learning strategies and teaching techniques that increase student</div>
<div class="ln" style="left:528.4px;top:430.73px;font-style:italic;color:#262626;word-spacing:0.000px">engagement in daily lessons and on the internet platforms.</div></div>
<svg class="abs" style="left:0;top:0" width="1024" height="579">
  <polygon points="649.3,180 689,238.9 669.8,238.9 669.8,299.3 630.2,299.3 630.2,238.9 610.5,238.9" fill="none" stroke="#e8161e" stroke-width="4" stroke-linejoin="miter" stroke-miterlimit="2"/>
</svg>
<div class="abs" style="left:190.9px;top:85.2px;width:29px;height:29px;border-radius:50%;background:#f8f61e"></div>
<svg class="abs" style="left:199px;top:93px" width="10" height="14"><path d="M3.3 2.3q1.2 0 1.7 0.7q0.5-0.7 1.7-0.7M5 3v8.4M3.3 11.9q1.2 0 1.7-0.7q0.5 0.7 1.7 0.7" stroke="#2a2a2a" stroke-width="0.9" fill="none"/></svg>
<div id="scroll" class="abs" style="left:1015px;top:84px;width:9px;height:495px;background:#dcdcdc;border-left:1px solid #d4d4d4">
  <div class="abs" style="left:0;top:0;width:8px;height:387px;background:#fff"></div>
  <svg class="abs" style="left:1px;top:3px" width="6" height="4"><path d="M0.5 3.2l2.5-2.5 2.5 2.5z" fill="#666"/></svg>
  <div class="abs" style="left:0;top:8.5px;width:8px;height:1px;background:#d8d8d8"></div>
  <div class="abs" style="left:0;top:486px;width:8px;height:9px;background:#f4f4f4"></div>
  <svg class="abs" style="left:1px;top:489px" width="6" height="4"><path d="M0.5 0.8l2.5 2.5 2.5-2.5z" fill="#666"/></svg>
</div>
</div>
</body></html>
